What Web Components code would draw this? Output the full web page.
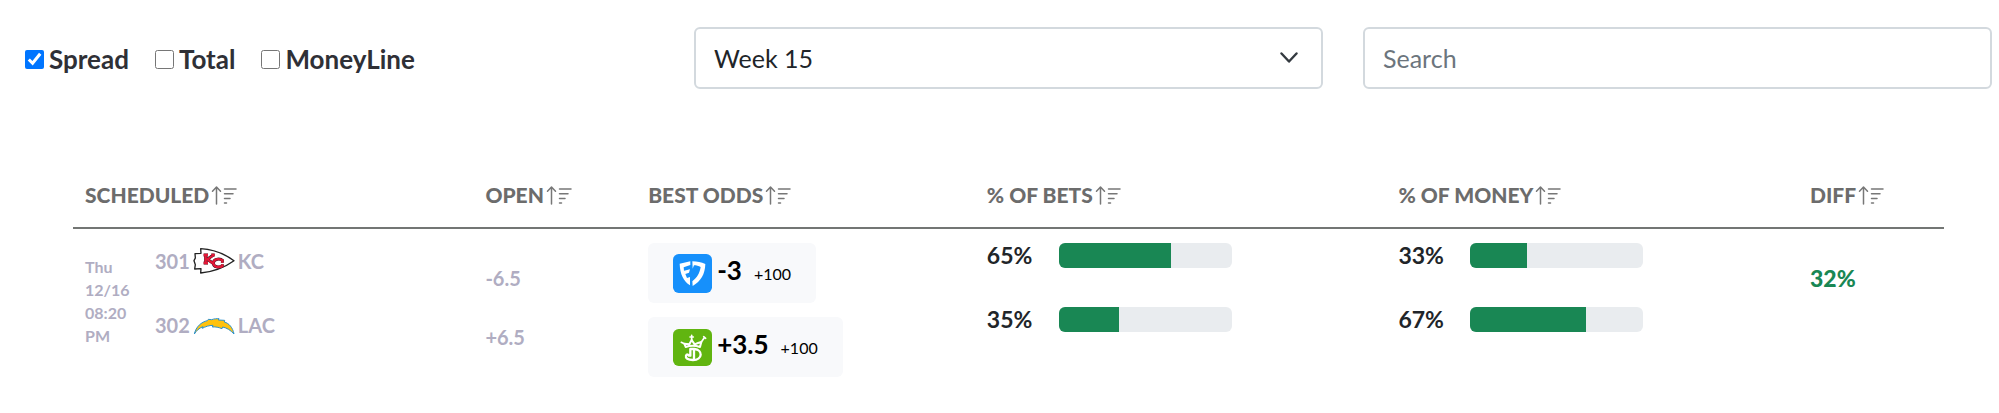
<!DOCTYPE html>
<html lang="en">
<head>
<meta charset="utf-8">
<title>Public betting</title>
<style>
  body { margin: 0; background: #fff; color: #212529; font-family: Lato, "Liberation Sans", sans-serif; font-size: 20px; }
</style>
</head>
<body>
<betting-page></betting-page>

<script>
const define = (name, html, setup) => {
  const template = document.createElement('template');
  template.innerHTML = html;
  customElements.define(name, class extends HTMLElement {
    connectedCallback() {
      if (this.shadowRoot) return;
      const root = this.attachShadow({ mode: 'open' });
      root.append(template.content.cloneNode(true));
      if (setup) setup(this, root);
    }
  });
};

define('filter-check', `
  <style>
    :host { display: block; }
    label { display: flex; align-items: center; gap: 5px; font-size: 26px; line-height: 32px; font-weight: 700; color: #2f3036; }
    input { width: 19px; height: 19px; margin: 0; accent-color: #0075ff; }
  </style>
  <label><input type="checkbox"><slot></slot></label>`,
  (host, root) => { root.querySelector('input').checked = host.hasAttribute('checked'); });

define('week-select', `
  <style>
    :host { display: grid; align-items: center; }
    select, svg { grid-area: 1 / 1; }
    select { appearance: none; width: 100%; height: 62px; padding: 0 60px 0 18px; border: 2px solid #d3d9de; border-radius: 6px;
      background: #fff; color: #212529; font: 400 25px Lato, sans-serif; }
    svg { justify-self: end; margin-right: 25px; pointer-events: none; }
  </style>
  <select aria-label="Week"><option>Week 15</option></select>
  <svg width="18" height="12" viewBox="0 0 18 12" fill="none" stroke="#343a40" stroke-width="2.4" stroke-linecap="round" stroke-linejoin="round"><path d="M1.5 1.5 9 9.5l7.500-8"/></svg>`);

define('search-box', `
  <style>
    :host { display: block; }
    input { box-sizing: border-box; width: 100%; height: 62px; padding: 0 18px; border: 2px solid #d3d9de; border-radius: 6px;
      background: #fff; color: #212529; font: 400 25px Lato, sans-serif; display: block; }
    input::placeholder { color: #6c757d; opacity: 1; }
  </style>
  <input type="search" placeholder="Search" aria-label="Search">`);

define('sort-button', `
  <style>
    :host { display: block; }
    button { display: flex; align-items: center; gap: 2px; padding: 0; border: 0; background: none; color: #6c6c6c;
      font: 900 21px/30px Lato, sans-serif; white-space: nowrap; }
  </style>
  <button type="button"><slot></slot><svg width="26" height="20" viewBox="0 0 26 20" fill="none" stroke="#777" stroke-width="1.5" stroke-linecap="round" stroke-linejoin="round"><path d="M5.500 19V2.500M1.500 6.200 5.500 2l4 4.200M13.500 4H25M13.500 8.700H22M13.500 13.400H19M13.500 18H15.500"/></svg></button>`);

define('team-line', `
  <style>
    :host { display: flex; align-items: center; height: 30px; gap: 3px; font-size: 20px; font-weight: 700; }
    ::slotted(svg) { flex: none; }
  </style>
  <slot name="number"></slot><slot name="logo"></slot><slot></slot>`);

define('odds-card', `
  <style>
    :host { display: flex; align-items: center; gap: 5px; width: fit-content; height: 60px; padding: 0 25px; border-radius: 6px; background: #f8f9fb; color: #000; }
    .line { display: flex; align-items: baseline; gap: 12px; line-height: 30px; padding-bottom: 2px; }
    b { font-size: 26px; font-weight: 700; }
    span { font-size: 16px; }
  </style>
  <slot name="book"></slot>
  <div class="line"><b><slot></slot></b><span><slot name="price"></slot></span></div>`);

define('percent-bar', `
  <style>
    :host { display: flex; align-items: center; gap: 26px; height: 25px; font-size: 23px; line-height: 24px; font-weight: 700; }
    output { width: 46px; padding-bottom: 2px; }
    .track { width: 173px; height: 25px; border-radius: 6px; background: #e9ecef; overflow: hidden; }
    .fill { height: 100%; background: #198754; }
  </style>
  <output></output><div class="track"><div class="fill"></div></div>`,
  (host, root) => {
    const value = host.getAttribute('value') + '%';
    root.querySelector('output').textContent = value;
    root.querySelector('.fill').style.width = value;
  });

define('odds-table', `
  <style>
    :host { display: block; }
    table { width: 100%; border-collapse: collapse; table-layout: fixed; }
    th, td { padding: 0 0 0 12px; text-align: left; }
    th { height: 64px; border-bottom: 2px solid #737674; vertical-align: middle; }
    td { vertical-align: top; padding-top: 14px; }
    .game { display: flex; gap: 16px; color: #b0adc2; }
    time { width: 54px; margin-top: 12px; font-size: 16px; line-height: 23px; font-weight: 700; }
    .pair { display: grid; align-content: start; }
    .teams { gap: 34px; margin-top: 3px; }
    .open { gap: 29px; margin-top: 20px; font-size: 20px; line-height: 30px; font-weight: 700; color: #b0adc2; }
    .odds { gap: 14px; }
    .bars { gap: 39px; }
    .diff { margin-top: 20px; font-size: 23px; line-height: 30px; font-weight: 900; color: #198754; }
  </style>
  <table>
    <colgroup><col style="width:21.4%"><col style="width:8.7%"><col style="width:18.1%"><col style="width:22%"><col style="width:22%"><col></colgroup>
    <thead><tr>
      <th scope="col"><sort-button>SCHEDULED</sort-button></th>
      <th scope="col"><sort-button>OPEN</sort-button></th>
      <th scope="col"><sort-button>BEST ODDS</sort-button></th>
      <th scope="col"><sort-button>% OF BETS</sort-button></th>
      <th scope="col"><sort-button>% OF MONEY</sort-button></th>
      <th scope="col"><sort-button>DIFF</sort-button></th>
    </tr></thead>
    <tbody><tr>
      <td><div class="game">
        <time>Thu 12/16 08:20 PM</time>
        <div class="pair teams">
          <team-line><span slot="number">301</span>
            <svg slot="logo" width="42" height="28" viewBox="0 0 126 84"><path d="M23 5C60 7 94 20 123 41 94 62 59 74 23 78l1-13-19 1 2-13-4-12 4-8-1-13 18-1z" fill="#fff" stroke="#222" stroke-width="4" stroke-linejoin="round"/><g fill="none" stroke-linejoin="round"><path d="M32 24h13M38 24v24M32 48h13M60 25 43 37l17 12M55 24h10M90 42c-8-9-27-7-29 5-1 14 18 16 29 9M88 37v10M88 52v8" stroke="#35121c" stroke-width="9"/><path d="M32 24h13M38 24v24M32 48h13M60 25 43 37l17 12M55 24h10M90 42c-8-9-27-7-29 5-1 14 18 16 29 9M88 37v10M88 52v8" stroke="#e31837" stroke-width="7"/></g></svg>
            <span>KC</span></team-line>
          <team-line><span slot="number">302</span>
            <svg slot="logo" width="42" height="28" viewBox="0 0 126 84"><path d="M4 69C9 47 25 33 43 29l3-4 10 1c8-3 15-3 22-3l-2 4 19 1-1 5c14 4 25 16 29 36-11-12-21-18-34-21l-2 5c-10-4-19-6-29-5l2-5c-12 0-23 4-32 9l2-5C19 51 10 59 4 69z" fill="#ffc20e" stroke="#2b91cc" stroke-width="3" stroke-linejoin="round"/></svg>
            <span>LAC</span></team-line>
        </div>
      </div></td>
      <td><div class="pair open"><span>-6.5</span><span>+6.5</span></div></td>
      <td><div class="pair odds">
        <odds-card>
          <svg slot="book" width="39" height="39" viewBox="0 0 117 117"><rect width="117" height="117" rx="17" fill="#1690fb"/><g fill="#fff"><path d="M20 29 52 22v11l-20 7 1 10 18-4-3 10-11 4 5 12 9-3v25C32 82 21 61 20 29z"/><path d="M58 22c14 0 27 3 39 8-1 31-13 51-38 66l-1-14c15-12 22-24 25-43-6-3-13-5-20-5l-4 10z"/></g></svg>
          -3<span slot="price">+100</span>
        </odds-card>
        <odds-card>
          <svg slot="book" width="39" height="37" viewBox="0 0 117 111"><rect width="117" height="111" rx="17" fill="#61b510"/><g fill="none" stroke="#fff" stroke-linecap="round" stroke-linejoin="round"><path d="M38 54 34 44l15 2 7-13 9 13 10-4 10-3-4 15M38 54q21-8 43 0" stroke-width="6"/><path d="M56 33V19M51 24h10M34 44l-9-4M85 39l10-14M92 23l6 5" stroke-width="5"/><path d="M52 60h12c26 2 26 33-4 33-16 0-23-6-21-13 2-5 8-4 9 0M52 60v20M63 62v28" stroke-width="7"/></g></svg>
          +3.5<span slot="price">+100</span>
        </odds-card>
      </div></td>
      <td><div class="pair bars"><percent-bar value="65"></percent-bar><percent-bar value="35"></percent-bar></div></td>
      <td><div class="pair bars"><percent-bar value="33"></percent-bar><percent-bar value="67"></percent-bar></div></td>
      <td><div class="diff">32%</div></td>
    </tr></tbody>
  </table>`);

define('betting-page', `
  <style>
    :host { display: block; }
    header { display: grid; grid-template-columns: repeat(3, 1fr); gap: 40px; align-items: center; padding: 27px 7px 0 25px; }
    .checks { display: flex; gap: 26px; padding-top: 2px; }
    main { padding: 74px 55px 0 73px; }
  </style>
  <header>
    <div class="checks">
      <filter-check checked>Spread</filter-check>
      <filter-check>Total</filter-check>
      <filter-check>MoneyLine</filter-check>
    </div>
    <week-select></week-select>
    <search-box></search-box>
  </header>
  <main><odds-table></odds-table></main>`);
</script>
</body>
</html>
